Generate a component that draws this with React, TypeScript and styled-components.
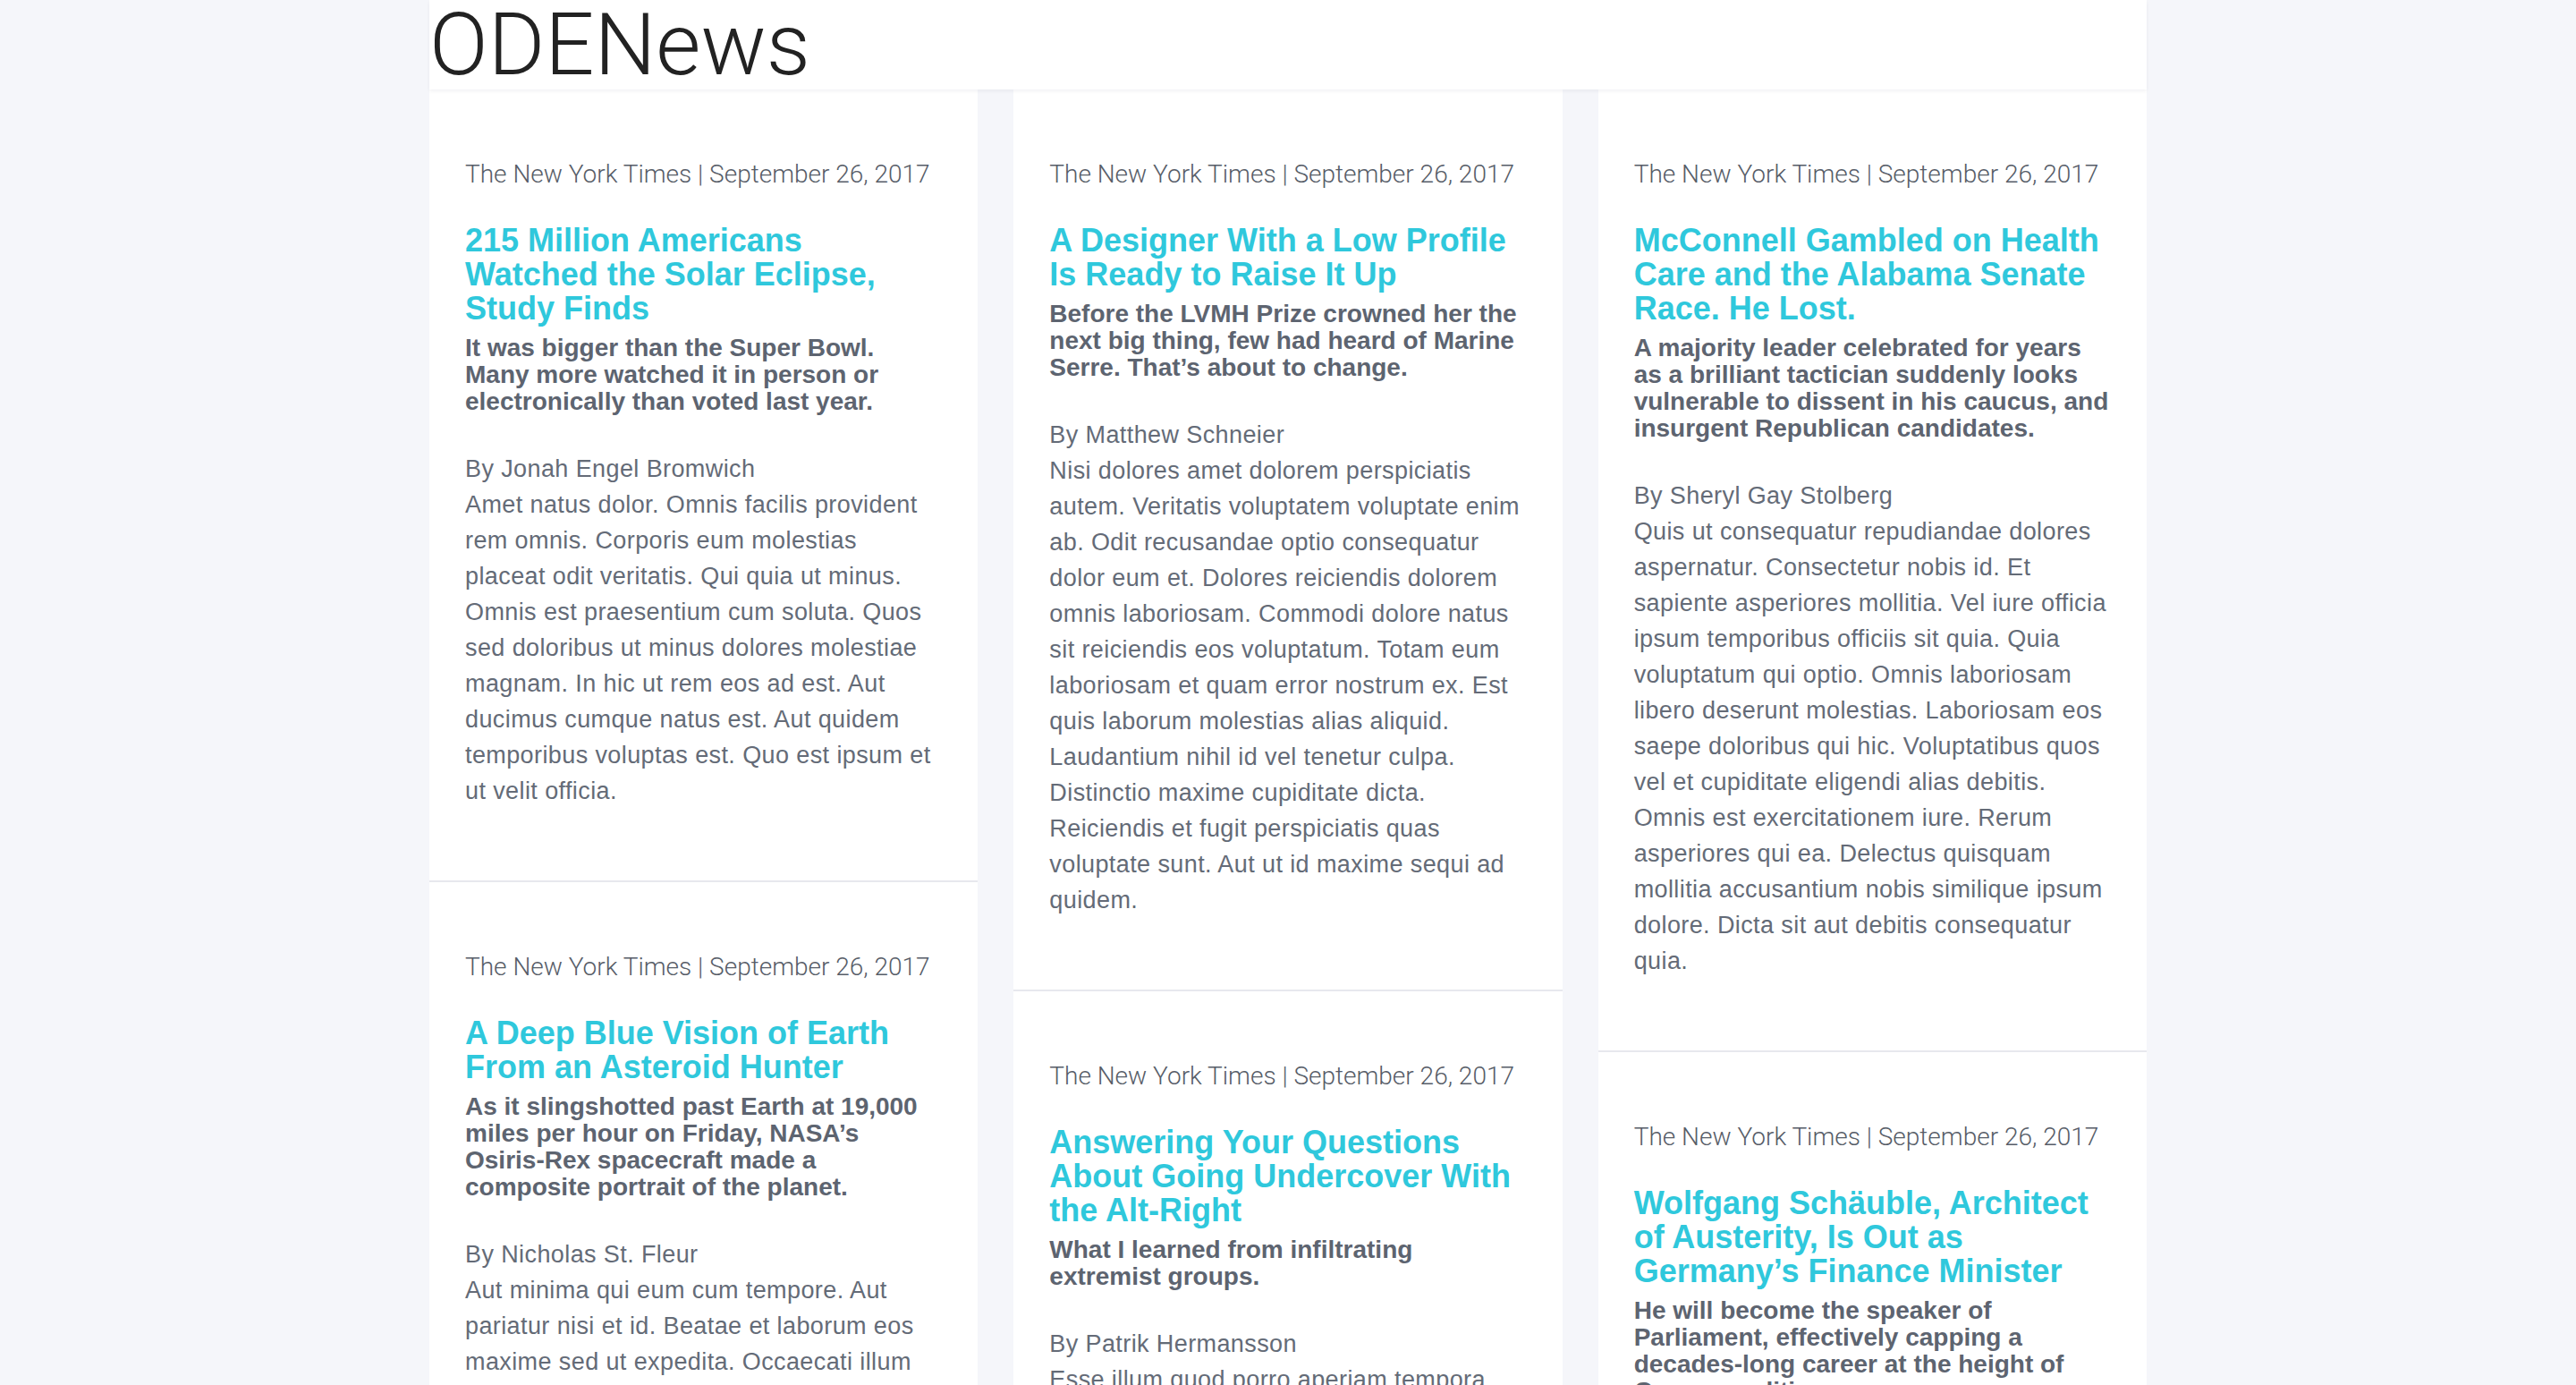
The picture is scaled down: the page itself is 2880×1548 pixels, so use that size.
import React from "react";
import styled, { createGlobalStyle } from "styled-components";

const GlobalStyle = createGlobalStyle`
  html, body {
    margin: 0;
    padding: 0;
    background: #f5f6fa;
    overflow: hidden;
  }
  * { box-sizing: border-box; }
`;

const Page = styled.div`
  width: 1920px;
  margin: 0 auto;
`;

const Header = styled.header`
  position: relative;
  z-index: 1;
  height: 100px;
  background: #ffffff;
  box-shadow: 0 2px 4px rgba(30, 40, 70, 0.06);
`;

const Logo = styled.h1`
  margin: 0;
  font-family: Roboto, "Liberation Sans", sans-serif;
  font-weight: 300;
  font-size: 97px;
  line-height: 100px;
  color: #222222;
`;

const Columns = styled.main`
  display: grid;
  grid-template-columns: repeat(3, 1fr);
  column-gap: 40px;
  align-items: start;
`;

const Column = styled.div`
  display: flex;
  flex-direction: column;
`;

const Card = styled.article`
  background: #ffffff;
  padding: 80px 40px;
  border-bottom: 2px solid #e7e8ee;
  font-family: "Liberation Sans", Arial, sans-serif;
`;

const Meta = styled.p`
  margin: 0 0 40px;
  font-family: Roboto, "Liberation Sans", sans-serif;
  font-weight: 300;
  font-size: 28px;
  line-height: 30px;
  color: #575d68;
`;

const Title = styled.h2`
  margin: 0 0 10px;
  font-size: 36px;
  line-height: 38px;
  font-weight: 700;
  color: #2fc8dc;
`;

const Summary = styled.p`
  margin: 0 0 40px;
  font-size: 28px;
  line-height: 30px;
  font-weight: 700;
  color: #5d6470;
`;

const Byline = styled.p`
  margin: 0;
  font-size: 27px;
  line-height: 40px;
  letter-spacing: 0.4px;
  color: #646b77;
`;

const Body = styled.p`
  margin: 0;
  font-size: 27px;
  line-height: 40px;
  letter-spacing: 0.4px;
  color: #646b77;
`;

type Article = {
  title: string;
  summary: string;
  author: string;
  body: string;
};

const SOURCE = "The New York Times | September 26, 2017";

const columns: Article[][] = [
  [
    {
      title: "215 Million Americans Watched the Solar Eclipse, Study Finds",
      summary:
        "It was bigger than the Super Bowl. Many more watched it in person or electronically than voted last year.",
      author: "By Jonah Engel Bromwich",
      body:
        "Amet natus dolor. Omnis facilis provident rem omnis. Corporis eum molestias placeat odit veritatis. Qui quia ut minus. Omnis est praesentium cum soluta. Quos sed doloribus ut minus dolores molestiae magnam. In hic ut rem eos ad est. Aut ducimus cumque natus est. Aut quidem temporibus voluptas est. Quo est ipsum et ut velit officia.",
    },
    {
      title: "A Deep Blue Vision of Earth From an Asteroid Hunter",
      summary:
        "As it slingshotted past Earth at 19,000 miles per hour on Friday, NASA\u2019s Osiris-Rex spacecraft made a composite portrait of the planet.",
      author: "By Nicholas St. Fleur",
      body:
        "Aut minima qui eum cum tempore. Aut pariatur nisi et id. Beatae et laborum eos maxime sed ut expedita. Occaecati illum voluptas et repellendus. Sed rerum quia ut. Ut nihil quia dolores eum.",
    },
  ],
  [
    {
      title: "A Designer With a Low Profile Is Ready to Raise It Up",
      summary:
        "Before the LVMH Prize crowned her the next big thing, few had heard of Marine Serre. That\u2019s about to change.",
      author: "By Matthew Schneier",
      body:
        "Nisi dolores amet dolorem perspiciatis autem. Veritatis voluptatem voluptate enim ab. Odit recusandae optio consequatur dolor eum et. Dolores reiciendis dolorem omnis laboriosam. Commodi dolore natus sit reiciendis eos voluptatum. Totam eum laboriosam et quam error nostrum ex. Est quis laborum molestias alias aliquid. Laudantium nihil id vel tenetur culpa. Distinctio maxime cupiditate dicta. Reiciendis et fugit perspiciatis quas voluptate sunt. Aut ut id maxime sequi ad quidem.",
    },
    {
      title: "Answering Your Questions About Going Undercover With the Alt-Right",
      summary: "What I learned from infiltrating extremist groups.",
      author: "By Patrik Hermansson",
      body:
        "Esse illum quod porro aperiam tempora. Quia et dolorem sit. Nam ut sed aut voluptas. Rerum dolores est magni.",
    },
  ],
  [
    {
      title: "McConnell Gambled on Health Care and the Alabama Senate Race. He Lost.",
      summary:
        "A majority leader celebrated for years as a brilliant tactician suddenly looks vulnerable to dissent in his caucus, and insurgent Republican candidates.",
      author: "By Sheryl Gay Stolberg",
      body:
        "Quis ut consequatur repudiandae dolores aspernatur. Consectetur nobis id. Et sapiente asperiores mollitia. Vel iure officia ipsum temporibus officiis sit quia. Quia voluptatum qui optio. Omnis laboriosam libero deserunt molestias. Laboriosam eos saepe doloribus qui hic. Voluptatibus quos vel et cupiditate eligendi alias debitis. Omnis est exercitationem iure. Rerum asperiores qui ea. Delectus quisquam mollitia accusantium nobis similique ipsum dolore. Dicta sit aut debitis consequatur quia.",
    },
    {
      title: "Wolfgang Sch\u00e4uble, Architect of Austerity, Is Out as Germany\u2019s Finance Minister",
      summary:
        "He will become the speaker of Parliament, effectively capping a decades-long career at the height of German politics.",
      author: "By Melissa Eddy",
      body:
        "Voluptas dolorem sint et. Quae ipsa sed nihil. Et sequi odio omnis quia.",
    },
  ],
];

function NewsCard({ article }: { article: Article }) {
  return (
    <Card>
      <Meta>{SOURCE}</Meta>
      <Title>{article.title}</Title>
      <Summary>{article.summary}</Summary>
      <Byline>{article.author}</Byline>
      <Body>{article.body}</Body>
    </Card>
  );
}

export default function App() {
  return (
    <>
      <GlobalStyle />
      <Page>
        <Header>
          <Logo>ODENews</Logo>
        </Header>
        <Columns>
          {columns.map((col, i) => (
            <Column key={i}>
              {col.map((a) => (
                <NewsCard key={a.title} article={a} />
              ))}
            </Column>
          ))}
        </Columns>
      </Page>
    </>
  );
}
